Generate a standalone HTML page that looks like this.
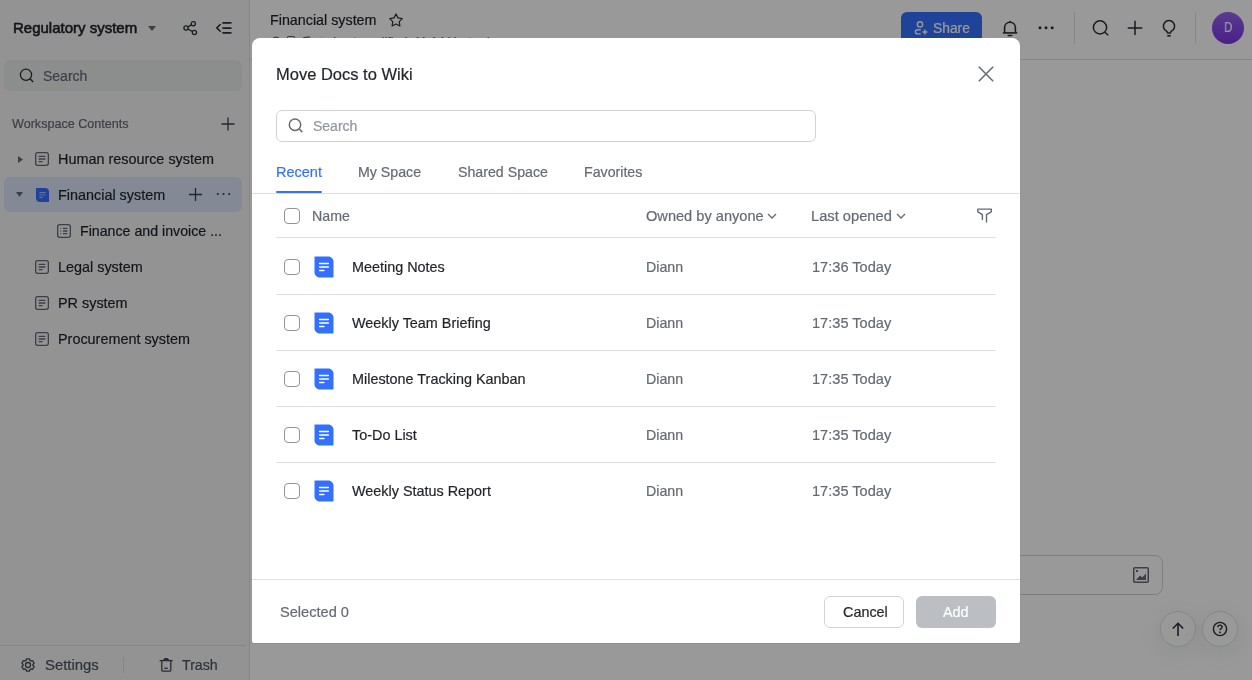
<!DOCTYPE html>
<html><head><meta charset="utf-8">
<style>
*{box-sizing:border-box;margin:0;padding:0}
html,body{width:1252px;height:680px;overflow:hidden;background:#fff;font-family:"Liberation Sans",sans-serif;color:#1f2329;position:relative;-webkit-font-smoothing:antialiased}
.abs{position:absolute}
.t{position:absolute;white-space:nowrap;line-height:1;will-change:transform;-webkit-text-stroke:0.2px currentColor}
svg{position:absolute;overflow:visible}
</style></head><body>
<div class="abs" style="left:0px;top:0px;width:249px;height:680px;background:#f5f6f7"></div>
<div class="abs" style="left:249px;top:0px;width:1px;height:680px;background:#dee0e3"></div>
<div class="t" style="left:13.2px;top:19.70px;font-size:15px;color:#1f2329;font-weight:normal;-webkit-text-stroke:0.6px #1f2329;">Regulatory system</div>
<svg style="left:148px;top:26px" width="8" height="5" viewBox="0 0 8 5"><path d="M0 0H8L4 5Z" fill="#646a73"/></svg>
<svg style="left:182px;top:19px" width="16" height="18" viewBox="0 0 16 18"><g fill="none" stroke="#2b2f36" stroke-width="1.3"><circle cx="11.3" cy="4.8" r="2.1"/><circle cx="4" cy="9" r="2.1"/><circle cx="12.4" cy="13.5" r="2.1"/><path d="M5.9 7.9L9.4 5.9M5.9 10.1L10.5 12.5"/></g></svg>
<svg style="left:215px;top:21px" width="18" height="14" viewBox="0 0 18 14"><g fill="none" stroke="#2b2f36" stroke-width="1.75"><path d="M5.2 3.5L1.8 6.9L5.2 10.2" stroke-width="1.55" stroke-linecap="round" stroke-linejoin="round"/><path d="M7.4 1.9H16.5M7.4 7H16.5M7.4 11.9H16.5"/></g></svg>
<div class="abs" style="left:4px;top:60px;width:238px;height:31px;border-radius:6px;background:rgba(31,35,41,0.05)"></div>
<svg style="left:19px;top:68px" width="16" height="16" viewBox="0 0 16 16"><g fill="none" stroke="#2b2f36" stroke-width="1.3"><circle cx="7" cy="6.8" r="5.6"/><path d="M11 10.8L14.2 14"/></g></svg>
<div class="t" style="left:42.8px;top:69.05px;font-size:14px;color:#646a73;font-weight:normal;">Search</div>
<div class="t" style="left:12px;top:117.63px;font-size:12.6px;color:#646a73;font-weight:normal;">Workspace Contents</div>
<svg style="left:220px;top:116px" width="16" height="16" viewBox="0 0 16 16"><g stroke="#3b4048" stroke-width="1.3"><path d="M8 1.5V14.5M1.5 8H14.5"/></g></svg>
<div class="abs" style="left:4px;top:177px;width:238px;height:35px;border-radius:6px;background:rgba(51,112,255,0.12)"></div>
<svg style="left:18px;top:156px" width="5" height="7" viewBox="0 0 5 7"><path d="M0 0L5 3.5L0 7Z" fill="#646a73"/></svg>
<svg style="left:16px;top:192px" width="7" height="5" viewBox="0 0 7 5"><path d="M0 0H7L3.5 5Z" fill="#646a73"/></svg>
<svg style="left:35px;top:152px" width="14" height="14" viewBox="0 0 14 14"><g fill="none" stroke="#646a73" stroke-width="1.3"><rect x="0.65" y="0.65" width="12.7" height="12.7" rx="2"/><path d="M3.6 4.3H10.4M3.6 7H10.4M3.6 9.7H7.6"/></g></svg>
<svg style="left:36px;top:188px" width="13" height="14" viewBox="0 0 13 14"><path d="M0 0H9.5C11.4 0 13 1.6 13 3.5V14H3.5C1.6 14 0 12.4 0 10.5Z" fill="#3370ff"/><path d="M3.3 4.6H9.7M3.3 7H9.7M3.3 9.4H6.8" stroke="#fff" stroke-opacity="0.55" stroke-width="1.1"/></svg>
<svg style="left:57px;top:224px" width="14" height="14" viewBox="0 0 14 14"><g fill="none" stroke="#646a73" stroke-width="1.3"><rect x="0.65" y="0.65" width="12.7" height="12.7" rx="2"/><path d="M6 4.3H10.4M6 7H10.4M6 9.7H10.4M3.4 4.3H4.2M3.4 7H4.2M3.4 9.7H4.2"/></g></svg>
<div class="t" style="left:58px;top:152.11px;font-size:14.4px;color:#1f2329;font-weight:normal;">Human resource system</div>
<div class="t" style="left:58px;top:188.11px;font-size:14.4px;color:#1f2329;font-weight:normal;">Financial system</div>
<div class="t" style="left:80px;top:224.28px;font-size:14.2px;color:#1f2329;font-weight:normal;">Finance and invoice ...</div>
<div class="t" style="left:58px;top:260.11px;font-size:14.4px;color:#1f2329;font-weight:normal;">Legal system</div>
<div class="t" style="left:58px;top:296.11px;font-size:14.4px;color:#1f2329;font-weight:normal;">PR system</div>
<div class="t" style="left:58px;top:332.11px;font-size:14.4px;color:#1f2329;font-weight:normal;">Procurement system</div>
<svg style="left:35px;top:260px" width="14" height="14" viewBox="0 0 14 14"><g fill="none" stroke="#646a73" stroke-width="1.3"><rect x="0.65" y="0.65" width="12.7" height="12.7" rx="2"/><path d="M3.6 4.3H10.4M3.6 7H10.4M3.6 9.7H7.6"/></g></svg>
<svg style="left:35px;top:296px" width="14" height="14" viewBox="0 0 14 14"><g fill="none" stroke="#646a73" stroke-width="1.3"><rect x="0.65" y="0.65" width="12.7" height="12.7" rx="2"/><path d="M3.6 4.3H10.4M3.6 7H10.4M3.6 9.7H7.6"/></g></svg>
<svg style="left:35px;top:332px" width="14" height="14" viewBox="0 0 14 14"><g fill="none" stroke="#646a73" stroke-width="1.3"><rect x="0.65" y="0.65" width="12.7" height="12.7" rx="2"/><path d="M3.6 4.3H10.4M3.6 7H10.4M3.6 9.7H7.6"/></g></svg>
<svg style="left:188px;top:187px" width="15" height="15" viewBox="0 0 15 15"><g stroke="#3b4048" stroke-width="1.3"><path d="M7.5 1V14M1 7.5H14"/></g></svg>
<svg style="left:216px;top:192.3px" width="15" height="4" viewBox="0 0 15 4"><g fill="#3b4048"><circle cx="1.8" cy="2" r="1.1"/><circle cx="7.5" cy="2" r="1.1"/><circle cx="13.2" cy="2" r="1.1"/></g></svg>
<div class="abs" style="left:0px;top:645px;width:246px;height:1px;background:#dee0e3"></div>
<svg style="left:21px;top:657.7px" width="14" height="14" viewBox="0 0 14 14"><g fill="none" stroke="#45494f" stroke-width="1.3" stroke-linejoin="round"><path d="M5.45 0.79L8.55 0.79L8.99 2.52L9.88 3.04L11.60 2.55L13.15 5.24L11.87 6.49L11.87 7.51L13.15 8.76L11.60 11.45L9.88 10.96L8.99 11.48L8.55 13.21L5.45 13.21L5.01 11.48L4.12 10.96L2.40 11.45L0.85 8.76L2.13 7.51L2.13 6.49L0.85 5.24L2.40 2.55L4.12 3.04L5.01 2.52Z"/><circle cx="7" cy="7" r="2.5"/></g></svg>
<div class="t" style="left:45px;top:657.59px;font-size:14.9px;color:#4e535b;font-weight:normal;">Settings</div>
<div class="abs" style="left:123px;top:657px;width:1px;height:16px;background:#dee0e3"></div>
<svg style="left:159px;top:657px" width="14" height="15" viewBox="0 0 14 15"><g fill="none" stroke="#45494f" stroke-width="1.3"><path d="M0.6 3.6H13.6"/><path d="M2.8 3.6V13C2.8 13.7 3.3 14.2 4 14.2H10.6C11.3 14.2 11.8 13.7 11.8 13V3.6"/><path d="M5.2 11.3H8.8"/></g><path d="M4 3.2C4.4 1.7 5.5 1.1 7.1 1.1S9.8 1.7 10.2 3.2Z" fill="#45494f"/></svg>
<div class="t" style="left:182px;top:658.18px;font-size:14.2px;color:#4e535b;font-weight:normal;">Trash</div>
<div class="t" style="left:270px;top:13.10px;font-size:14.3px;color:#1f2329;font-weight:normal;">Financial system</div>
<svg style="left:388px;top:12px" width="16" height="16" viewBox="0 0 16 16"><path d="M8.00 2.00L10.00 5.85L14.28 6.56L11.23 9.65L11.88 13.94L8.00 12.00L4.12 13.94L4.77 9.65L1.72 6.56L6.00 5.85Z" fill="none" stroke="#2b2f36" stroke-width="1.2" stroke-linejoin="round"/></svg>
<div class="t" style="left:333px;top:35.92px;font-size:12.5px;color:#646a73;font-weight:normal;">Last modified: 11:14 Yesterday</div>
<svg style="left:270px;top:36px" width="12" height="12" viewBox="0 0 12 12"><circle cx="6" cy="6" r="4.8" fill="none" stroke="#646a73" stroke-width="1.3"/></svg>
<div class="abs" style="left:287px;top:36px;width:8px;height:10px;border:1.3px solid #646a73;border-radius:1px"></div>
<svg style="left:299px;top:36px" width="12" height="10" viewBox="0 0 12 10"><path d="M1 5L5 1.5L11 0.8" fill="none" stroke="#646a73" stroke-width="1.3"/></svg>
<div class="abs" style="left:321px;top:36px;width:1px;height:10px;background:#dee0e3"></div>
<div class="abs" style="left:901px;top:12px;width:81px;height:32px;border-radius:6px;background:#3370ff"></div>
<svg style="left:913px;top:20px" width="16" height="16" viewBox="0 0 16 16"><g fill="none" stroke="#fff" stroke-width="1.4"><circle cx="7" cy="4.4" r="2.6"/><path d="M7.8 9.7H4.6C3.3 9.7 2.4 10.6 2.4 11.8C2.4 13 3.3 13.9 4.6 13.9H7.8"/><path d="M9.4 12.1H14.4M11.9 9.6V14.6" stroke-width="1.5"/></g></svg>
<div class="t" style="left:933.4px;top:22.32px;font-size:13.8px;color:#fff;font-weight:normal;">Share</div>
<svg style="left:1002px;top:20px" width="16" height="16" viewBox="0 0 16 16"><g fill="none" stroke="#2b2f36" stroke-width="1.6"><path d="M2.6 12.6V7.6C2.6 4.5 5 2.2 8 2.2S13.4 4.5 13.4 7.6V12.6"/><path d="M0.8 12.9H15.2"/><path d="M6.2 15.5H9.8" stroke-width="1.5" stroke-linecap="round"/></g><path d="M6.6 2.3L8 0.6L9.4 2.3Z" fill="#2b2f36"/></svg>
<svg style="left:1038px;top:26px" width="16" height="4" viewBox="0 0 16 4"><g fill="#2b2f36"><circle cx="2" cy="1.8" r="1.5"/><circle cx="8" cy="1.8" r="1.5"/><circle cx="14.2" cy="1.8" r="1.5"/></g></svg>
<div class="abs" style="left:1074px;top:12px;width:1px;height:32px;background:#dee0e3"></div>
<svg style="left:1092px;top:19px" width="18" height="18" viewBox="0 0 18 18"><g fill="none" stroke="#2b2f36" stroke-width="1.5"><circle cx="8" cy="8.4" r="6.6"/><path d="M12.8 13.2L16.3 16.3"/></g></svg>
<svg style="left:1127px;top:20px" width="16" height="16" viewBox="0 0 16 16"><g stroke="#2b2f36" stroke-width="1.5"><path d="M8 0.7V15M0.7 7.9H15.3"/></g></svg>
<svg style="left:1161px;top:19px" width="16" height="18" viewBox="0 0 16 18"><g fill="none" stroke="#2b2f36" stroke-width="1.5"><path d="M5.7 12.3A5.6 5.6 0 1 1 10.3 12.3C9.8 12.6 9.6 13 9.5 13.9H6.5C6.4 13 6.2 12.6 5.7 12.3Z" stroke-linejoin="round"/></g><rect x="6.3" y="16" width="3.4" height="1.6" fill="#2b2f36"/></svg>
<div class="abs" style="left:1195px;top:12px;width:1px;height:32px;background:#dee0e3"></div>
<div class="abs" style="left:1212px;top:12px;width:32px;height:32px;border-radius:50%;background:linear-gradient(180deg,#9462f0,#7b35e6)"></div>
<div class="t" style="left:1223.6px;top:19.57px;font-size:14.8px;color:#fff;font-weight:normal;transform:scaleX(0.78);transform-origin:0 0;">D</div>
<div class="abs" style="left:250px;top:59px;width:1002px;height:1px;background:#dee0e3"></div>
<div class="abs" style="left:900px;top:555px;width:263px;height:40px;border-radius:8px;border:1px solid #d0d3d6"></div>
<svg style="left:1133px;top:567px" width="16" height="16" viewBox="0 0 16 16"><rect x="0.75" y="0.75" width="14.5" height="14.5" rx="1" fill="none" stroke="#646a73" stroke-width="1.5"/><rect x="3" y="3" width="2" height="2" fill="#646a73"/><path d="M3 13L7 8.5L9.3 10.5L13 6.5V13Z" fill="#646a73"/></svg>
<div class="abs" style="left:1160px;top:611px;width:36px;height:36px;border-radius:50%;border:1px solid #dee0e3;background:#fff;box-shadow:0 6px 24px rgba(31,35,41,0.08)"></div>
<div class="abs" style="left:1202px;top:611px;width:36px;height:36px;border-radius:50%;border:1px solid #dee0e3;background:#fff;box-shadow:0 6px 24px rgba(31,35,41,0.08)"></div>
<svg style="left:1172px;top:622px" width="12" height="14" viewBox="0 0 12 14"><g fill="none" stroke="#2b2f36" stroke-width="1.6"><path d="M6 1.3V14"/><path d="M0.8 6.5L6 1.3L11.2 6.5"/></g></svg>
<svg style="left:1212px;top:621px" width="16" height="16" viewBox="0 0 16 16"><g fill="none" stroke="#2b2f36" stroke-width="1.4"><circle cx="8" cy="8" r="6.6"/><path d="M5.9 6.2C5.9 4.9 6.8 4.1 8 4.1S10.1 4.9 10.1 6C10.1 7.4 8 7.6 8 9.2"/></g><circle cx="8" cy="11.4" r="0.9" fill="#2b2f36"/></svg>
<div class="abs" style="left:0px;top:0px;width:1252px;height:680px;background:rgba(0,0,0,0.4)"></div>
<div class="abs" style="left:252px;top:38px;width:768px;height:605px;border-radius:8px 8px 2px 2px;background:#fff;box-shadow:0 1px 1px rgba(0,0,0,0.08)"></div>
<div class="t" style="left:276px;top:66.03px;font-size:16.5px;color:#1f2329;font-weight:normal;">Move Docs to Wiki</div>
<svg style="left:978px;top:66px" width="16" height="16" viewBox="0 0 16 16"><g stroke="#646a73" stroke-width="1.5"><path d="M0.8 0.8L15.2 15.2M15.2 0.8L0.8 15.2"/></g></svg>
<div class="abs" style="left:276px;top:110px;width:540px;height:32px;border-radius:6px;border:1px solid #d0d3d6"></div>
<svg style="left:288px;top:118px" width="16" height="16" viewBox="0 0 16 16"><g fill="none" stroke="#646a73" stroke-width="1.5"><circle cx="7" cy="6.8" r="5.7"/><path d="M11 10.8L14.3 14.1"/></g></svg>
<div class="t" style="left:312.5px;top:119.25px;font-size:14px;color:#8f959e;font-weight:normal;">Search</div>
<div class="t" style="left:276px;top:165.13px;font-size:14.5px;color:#3370ff;font-weight:normal;">Recent</div>
<div class="t" style="left:357.8px;top:165.38px;font-size:14.2px;color:#646a73;font-weight:normal;">My Space</div>
<div class="t" style="left:458.3px;top:165.38px;font-size:14.2px;color:#646a73;font-weight:normal;">Shared Space</div>
<div class="t" style="left:583.9px;top:165.38px;font-size:14.2px;color:#646a73;font-weight:normal;">Favorites</div>
<div class="abs" style="left:276px;top:191px;width:46px;height:2px;border-radius:1px;background:#3370ff"></div>
<div class="abs" style="left:252px;top:193px;width:768px;height:1px;background:#dee0e3"></div>
<div class="abs" style="left:284px;top:208px;width:16px;height:16px;border-radius:4px;border:1.3px solid #8f959e;background:#fff"></div>
<div class="t" style="left:312.3px;top:209.18px;font-size:14.2px;color:#646a73;font-weight:normal;">Name</div>
<div class="t" style="left:646px;top:208.84px;font-size:14.6px;color:#646a73;font-weight:normal;">Owned by anyone</div>
<svg style="left:767px;top:213px" width="10" height="6" viewBox="0 0 10 6"><path d="M1 1L5 5L9 1" fill="none" stroke="#646a73" stroke-width="1.3"/></svg>
<div class="t" style="left:811px;top:208.76px;font-size:14.7px;color:#646a73;font-weight:normal;">Last opened</div>
<svg style="left:896px;top:213px" width="10" height="6" viewBox="0 0 10 6"><path d="M1 1L5 5L9 1" fill="none" stroke="#646a73" stroke-width="1.3"/></svg>
<svg style="left:977px;top:208px" width="16" height="15" viewBox="0 0 16 15"><path d="M5.4 11.6V6.6L0.8 3.8V1.1H14.3V3.8L9.5 6.6V14" fill="none" stroke="#646a73" stroke-width="1.4" stroke-linejoin="round" stroke-linecap="round"/></svg>
<div class="abs" style="left:276px;top:237px;width:720px;height:1px;background:#dee0e3"></div>
<div class="abs" style="left:284px;top:259px;width:16px;height:16px;border-radius:4px;border:1.3px solid #8f959e;background:#fff"></div>
<svg style="left:314px;top:256px" width="20" height="22" viewBox="0 0 20 22"><path d="M0.5 0.5H14.5C17 0.5 19.5 3 19.5 5.5V21.5H5.5C3 21.5 0.5 19 0.5 16.5Z" fill="#3370ff"/><g stroke="#fff" stroke-width="1.3" stroke-linecap="round"><path d="M5.6 7.5H14.4M5.6 11H14.4M5.6 14.5H9.9"/></g></svg>
<div class="t" style="left:352.3px;top:260.21px;font-size:14.4px;color:#1f2329;font-weight:normal;">Meeting Notes</div>
<div class="t" style="left:646px;top:260.38px;font-size:14.2px;color:#646a73;font-weight:normal;">Diann</div>
<div class="t" style="left:811.6px;top:260.04px;font-size:14.6px;color:#646a73;font-weight:normal;">17:36 Today</div>
<div class="abs" style="left:276px;top:294px;width:720px;height:1px;background:#dee0e3"></div>
<div class="abs" style="left:284px;top:315px;width:16px;height:16px;border-radius:4px;border:1.3px solid #8f959e;background:#fff"></div>
<svg style="left:314px;top:312px" width="20" height="22" viewBox="0 0 20 22"><path d="M0.5 0.5H14.5C17 0.5 19.5 3 19.5 5.5V21.5H5.5C3 21.5 0.5 19 0.5 16.5Z" fill="#3370ff"/><g stroke="#fff" stroke-width="1.3" stroke-linecap="round"><path d="M5.6 7.5H14.4M5.6 11H14.4M5.6 14.5H9.9"/></g></svg>
<div class="t" style="left:352.3px;top:316.21px;font-size:14.4px;color:#1f2329;font-weight:normal;">Weekly Team Briefing</div>
<div class="t" style="left:646px;top:316.38px;font-size:14.2px;color:#646a73;font-weight:normal;">Diann</div>
<div class="t" style="left:811.6px;top:316.04px;font-size:14.6px;color:#646a73;font-weight:normal;">17:35 Today</div>
<div class="abs" style="left:276px;top:350px;width:720px;height:1px;background:#dee0e3"></div>
<div class="abs" style="left:284px;top:371px;width:16px;height:16px;border-radius:4px;border:1.3px solid #8f959e;background:#fff"></div>
<svg style="left:314px;top:368px" width="20" height="22" viewBox="0 0 20 22"><path d="M0.5 0.5H14.5C17 0.5 19.5 3 19.5 5.5V21.5H5.5C3 21.5 0.5 19 0.5 16.5Z" fill="#3370ff"/><g stroke="#fff" stroke-width="1.3" stroke-linecap="round"><path d="M5.6 7.5H14.4M5.6 11H14.4M5.6 14.5H9.9"/></g></svg>
<div class="t" style="left:352.3px;top:372.21px;font-size:14.4px;color:#1f2329;font-weight:normal;">Milestone Tracking Kanban</div>
<div class="t" style="left:646px;top:372.38px;font-size:14.2px;color:#646a73;font-weight:normal;">Diann</div>
<div class="t" style="left:811.6px;top:372.04px;font-size:14.6px;color:#646a73;font-weight:normal;">17:35 Today</div>
<div class="abs" style="left:276px;top:406px;width:720px;height:1px;background:#dee0e3"></div>
<div class="abs" style="left:284px;top:427px;width:16px;height:16px;border-radius:4px;border:1.3px solid #8f959e;background:#fff"></div>
<svg style="left:314px;top:424px" width="20" height="22" viewBox="0 0 20 22"><path d="M0.5 0.5H14.5C17 0.5 19.5 3 19.5 5.5V21.5H5.5C3 21.5 0.5 19 0.5 16.5Z" fill="#3370ff"/><g stroke="#fff" stroke-width="1.3" stroke-linecap="round"><path d="M5.6 7.5H14.4M5.6 11H14.4M5.6 14.5H9.9"/></g></svg>
<div class="t" style="left:352.3px;top:428.21px;font-size:14.4px;color:#1f2329;font-weight:normal;">To-Do List</div>
<div class="t" style="left:646px;top:428.38px;font-size:14.2px;color:#646a73;font-weight:normal;">Diann</div>
<div class="t" style="left:811.6px;top:428.04px;font-size:14.6px;color:#646a73;font-weight:normal;">17:35 Today</div>
<div class="abs" style="left:276px;top:462px;width:720px;height:1px;background:#dee0e3"></div>
<div class="abs" style="left:284px;top:483px;width:16px;height:16px;border-radius:4px;border:1.3px solid #8f959e;background:#fff"></div>
<svg style="left:314px;top:480px" width="20" height="22" viewBox="0 0 20 22"><path d="M0.5 0.5H14.5C17 0.5 19.5 3 19.5 5.5V21.5H5.5C3 21.5 0.5 19 0.5 16.5Z" fill="#3370ff"/><g stroke="#fff" stroke-width="1.3" stroke-linecap="round"><path d="M5.6 7.5H14.4M5.6 11H14.4M5.6 14.5H9.9"/></g></svg>
<div class="t" style="left:352.3px;top:484.21px;font-size:14.4px;color:#1f2329;font-weight:normal;">Weekly Status Report</div>
<div class="t" style="left:646px;top:484.38px;font-size:14.2px;color:#646a73;font-weight:normal;">Diann</div>
<div class="t" style="left:811.6px;top:484.04px;font-size:14.6px;color:#646a73;font-weight:normal;">17:35 Today</div>
<div class="abs" style="left:252px;top:579px;width:768px;height:1px;background:#dee0e3"></div>
<div class="t" style="left:280px;top:604.94px;font-size:14.6px;color:#646a73;font-weight:normal;">Selected 0</div>
<div class="abs" style="left:824px;top:596px;width:80px;height:32px;border-radius:6px;border:1px solid #d0d3d6;background:#fff"></div>
<div class="t" style="left:842.5px;top:605.11px;font-size:14.4px;color:#1f2329;font-weight:normal;">Cancel</div>
<div class="abs" style="left:916px;top:596px;width:80px;height:32px;border-radius:6px;background:#bbbfc4"></div>
<div class="t" style="left:943px;top:605.11px;font-size:14.4px;color:#fff;font-weight:normal;">Add</div>
</body></html>
